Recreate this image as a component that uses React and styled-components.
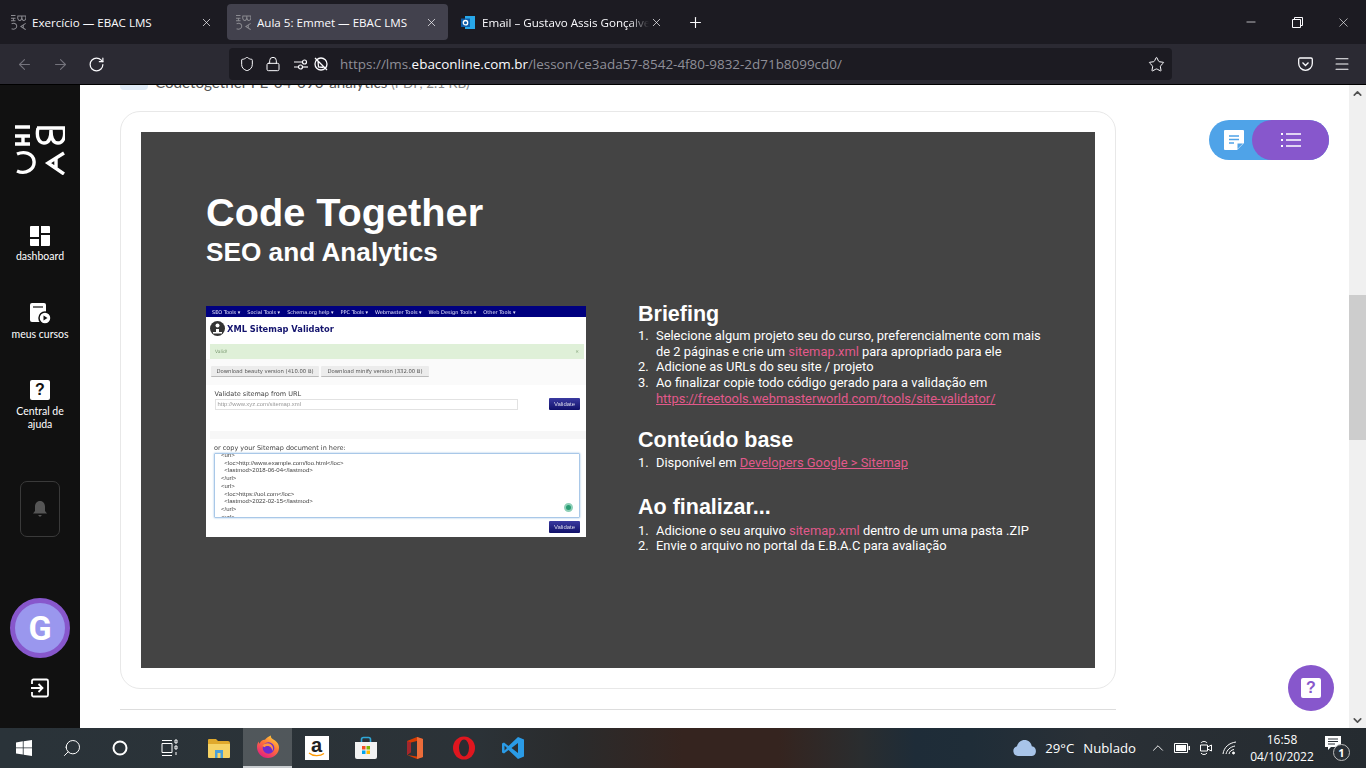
import React from 'react';
import styled, { createGlobalStyle } from 'styled-components';
import { ArrowLeft, ArrowRight, RotateCw, Lock, Star, Menu, Minus, X, Plus, Search, ChevronUp, ChevronDown, Shield } from 'lucide-react';

const GlobalStyle = createGlobalStyle`
  * { box-sizing: border-box; }
  html, body { margin: 0; padding: 0; height: 100%; overflow: hidden; background: #fff; }
  body { font-family: "Open Sans", "Liberation Sans", sans-serif; }
`;

const Screen = styled.div`
  width: 1366px;
  height: 768px;
  display: flex;
  flex-direction: column;
  overflow: hidden;
`;

/* browser chrome */
const TabBar = styled.div`
  height: 44px;
  background: #1c1b22;
  display: flex;
  align-items: center;
  padding: 0 0 0 2px;
  gap: 4px;
  flex: none;
`;

const Tab = styled.div`
  width: 221px;
  height: 36px;
  border-radius: 4px;
  background: ${p => (p.$active ? '#42414d' : 'transparent')};
  display: flex;
  align-items: center;
  padding: 0 9px;
  color: #fbfbfe;
  font-size: 11.6px;
  flex: none;
`;

const TabFavicon = styled.span`
  width: 15px;
  height: 15px;
  flex: none;
  display: flex;
  margin-right: 6px;
`;

const TabTitle = styled.span`
  flex: 1;
  white-space: nowrap;
  overflow: hidden;
  ${p => p.$fade && `mask-image: linear-gradient(to right, #000 88%, transparent 100%);`}
`;

const TabClose = styled.span`
  width: 14px;
  display: flex;
  justify-content: center;
  flex: none;
  margin-right: 1px;
`;

const NewTab = styled.span`
  display: flex;
  margin-left: 10px;
  color: #fbfbfe;
`;

const WindowControls = styled.div`
  margin-left: auto;
  display: flex;
  color: #fbfbfe;
`;

const WindowButton = styled.span`
  width: 46px;
  height: 44px;
  display: flex;
  align-items: center;
  justify-content: center;
`;

const NavBar = styled.div`
  height: 41px;
  background: #2b2a33;
  border-bottom: 1px solid #000;
  display: flex;
  align-items: center;
  flex: none;
`;

const NavButton = styled.span`
  width: 36px;
  display: flex;
  justify-content: center;
  color: ${p => (p.$dim ? '#74737c' : '#fbfbfe')};
`;

const NavButtons = styled.div`
  width: 229px;
  padding-left: 6px;
  display: flex;
  flex: none;
`;

const UrlBar = styled.div`
  width: 943px;
  height: 32px;
  background: #1c1b22;
  border-radius: 4px;
  display: flex;
  align-items: center;
  padding: 0 7px 0 10px;
  color: #fbfbfe;
  flex: none;
`;

const UrlIcon = styled.span`
  display: flex;
  flex: none;
  margin-right: ${p => p.$gap}px;
`;

const UrlText = styled.span`
  font-size: 13.45px;
  color: #8f8f98;
  white-space: nowrap;
  b { font-weight: 400; color: #fbfbfe; }
`;

const UrlStar = styled.span`
  margin-left: auto;
  display: flex;
`;

const NavRight = styled.div`
  flex: 1;
  display: flex;
  justify-content: flex-end;
  gap: 20px;
  padding-right: 15px;
  color: #fbfbfe;
  align-items: center;
`;

/* page */
const Main = styled.div`
  flex: 1;
  display: flex;
  min-height: 0;
  position: relative;
`;

const Sidebar = styled.nav`
  width: 80px;
  background: #111;
  flex: none;
  display: flex;
  flex-direction: column;
  align-items: center;
  padding-top: 40px;
  color: #fff;
`;

const SideLink = styled.div`
  display: flex;
  flex-direction: column;
  align-items: center;
  font-family: Lato, "Open Sans", sans-serif;
  font-size: 10.5px;
  line-height: 13px;
  text-align: center;
  margin-top: ${p => p.$top}px;
  width: 60px;
  svg { margin-bottom: ${p => p.$iconGap}px; display: block; }
`;

const BellBox = styled.div`
  width: 40px;
  height: 56px;
  margin-top: 50px;
  border: 1px solid #3a3a3a;
  border-radius: 7px;
  display: flex;
  align-items: center;
  justify-content: center;
`;

const Avatar = styled.div`
  width: 60px;
  height: 60px;
  margin-top: 61px;
  border-radius: 50%;
  border: 5px solid #8757cc;
  background: #9a97ee;
  color: #fff;
  display: flex;
  align-items: center;
  justify-content: center;
  font-family: Roboto, sans-serif;
  font-weight: 700;
  font-size: 34px;
`;

const ExitLink = styled.div`
  margin-top: 20px;
  display: flex;
`;

const Content = styled.div`
  flex: 1;
  min-width: 0;
  overflow: hidden;
  padding-left: 40px;
`;

const Attachment = styled.div`
  height: 26px;
  margin-top: -21px;
  display: flex;
  align-items: flex-end;
  gap: 7px;
  font-family: Lato, sans-serif;
  font-size: 15.2px;
  line-height: 14px;
  color: #555;
  white-space: nowrap;
  small { font-size: 13.5px; color: #888; }
`;

const AttachmentIcon = styled.span`
  width: 28px;
  height: 26px;
  background: #e0ebf7;
  border-radius: 4px;
  flex: none;
`;

const Card = styled.section`
  width: 996px;
  height: 578px;
  margin-top: 21px;
  padding: 20px;
  border: 1px solid #e8e8e8;
  border-radius: 20px;
  background: #fff;
`;

const Slide = styled.div`
  width: 954px;
  height: 536px;
  background: #444;
  color: #fff;
  padding: 57px 0 0 65px;
  font-family: "Liberation Sans", Arial, sans-serif;
`;

const SlideTitle = styled.h1`
  margin: 0;
  font-size: 39.7px;
  line-height: 46px;
  font-weight: 700;
`;

const SlideSubtitle = styled.h2`
  margin: 2px 0 0;
  font-size: 26.2px;
  line-height: 30px;
  font-weight: 700;
`;

const SlideRow = styled.div`
  display: flex;
  gap: 52px;
  margin-top: 34px;
`;

const Brief = styled.div`
  width: 410px;
`;

const BriefHeading = styled.h3`
  margin: ${p => p.$top || 0}px 0 ${p => p.$bottom || 1}px;
  font-size: 21.5px;
  line-height: 26px;
  font-weight: 700;
`;

const BriefList = styled.ol`
  margin: 0;
  padding: 0;
  list-style: none;
  font-family: Roboto, sans-serif;
  font-size: 12.9px;
  line-height: 15.7px;
`;

const BriefItem = styled.li`
  display: grid;
  grid-template-columns: 18px 1fr;
  white-space: nowrap;
`;

const Pink = styled.span`
  color: #e2598b;
`;

const PinkLink = styled.a`
  color: #e2598b;
  text-decoration: underline;
`;

/* the screenshot pasted on the slide */
const Shot = styled.div`
  width: 380px;
  height: 231px;
  margin-top: 5px;
  background: #fff;
  flex: none;
  display: flex;
  flex-direction: column;
  color: #333;
  font-family: "DejaVu Sans", sans-serif;
  overflow: hidden;
  filter: blur(0.45px);
`;

const ShotMenu = styled.div`
  height: 11px;
  background: #00007f;
  color: #e8e8ff;
  font-size: 5px;
  display: flex;
  align-items: center;
  gap: 7px;
  padding-left: 6px;
  white-space: nowrap;
  flex: none;
`;

const ShotHead = styled.div`
  height: 27px;
  display: flex;
  align-items: center;
  gap: 2px;
  padding: 0 0 4px 4px;
  font-size: 8.3px;
  font-weight: 700;
  color: #14146e;
  flex: none;
`;

const ShotAlert = styled.div`
  height: 15px;
  margin: 0 2px 0 4px;
  background: #dff0d8;
  color: #7a9a70;
  font-size: 4.5px;
  display: flex;
  align-items: center;
  justify-content: space-between;
  padding: 0 5px;
  flex: none;
`;

const ShotActions = styled.div`
  height: 26px;
  padding: 7px 0 0 5px;
  display: flex;
  gap: 2px;
  background: #fafafa;
  flex: none;
`;

const ShotDownload = styled.span`
  height: 11px;
  width: 108px;
  background: #ececec;
  border-bottom: 1px solid #bbb;
  border-radius: 1px;
  font-size: 5.3px;
  color: #555;
  display: flex;
  align-items: center;
  justify-content: center;
  white-space: nowrap;
`;

const ShotForm = styled.div`
  height: 46px;
  padding: 0 6px 0 8.5px;
  flex: none;
`;

const ShotLabel = styled.div`
  font-size: 6.5px;
  line-height: 9px;
  padding-top: ${p => p.$top}px;
  color: #444;
  white-space: nowrap;
`;

const ShotInputRow = styled.div`
  display: flex;
  justify-content: space-between;
  align-items: center;
  margin-top: -1px;
`;

const ShotInput = styled.div`
  width: 303px;
  height: 11px;
  border: 1px solid #e2e2e2;
  font-family: "Liberation Sans", sans-serif;
  font-size: 5.9px;
  color: #999;
  padding-left: 2px;
  line-height: 9px;
`;

const ShotButton = styled.span`
  width: 31px;
  height: 12px;
  background: linear-gradient(#3a3aa0, #10106a);
  border-radius: 1px;
  color: #dde;
  font-family: "Liberation Sans", sans-serif;
  font-size: 6px;
  display: flex;
  align-items: center;
  justify-content: center;
`;

const ShotBand = styled.div`
  height: 8px;
  margin-left: 4px;
  background: #f7f7f7;
  flex: none;
`;

const ShotPaste = styled.div`
  padding: 5px 6px 0 8px;
  flex: 1;
  display: flex;
  flex-direction: column;
`;

const ShotArea = styled.div`
  height: 65px;
  border: 1px solid #a9c8e8;
  border-radius: 1px;
  box-shadow: 0 0 2px #8fb8e0;
  font-family: "Liberation Sans", sans-serif;
  font-size: 6px;
  line-height: 7.7px;
  color: #444;
  padding-left: 6px;
  overflow: hidden;
  position: relative;
  white-space: pre;
  flex: none;
`;

const ShotCode = styled.div`
  margin-top: -2px;
`;

const GrammarlyDot = styled.span`
  position: absolute;
  right: 6px;
  bottom: 5px;
  width: 9px;
  height: 9px;
  border-radius: 50%;
  background: #2a9d74;
  border: 2px solid #8fd0b8;
`;

const ShotFooter = styled.div`
  display: flex;
  justify-content: flex-end;
  margin-top: 3px;
`;

const Rule = styled.hr`
  width: 996px;
  margin: 20px 0 0;
  border: 0;
  border-top: 1px solid #ddd;
`;

/* floating things over the page */
const NotesPill = styled.div`
  position: absolute;
  left: 1209px;
  top: 35px;
  width: 120px;
  height: 40px;
  border-radius: 20px;
  background: #4fa3e8;
`;

const NotesButton = styled.span`
  position: absolute;
  left: 15px;
  top: 10px;
  display: flex;
`;

const ListButton = styled.span`
  position: absolute;
  right: 0;
  top: 0;
  width: 77px;
  height: 40px;
  border-radius: 20px;
  background: #8757cc;
  display: flex;
  align-items: center;
  justify-content: center;
`;

const HelpFab = styled.div`
  position: absolute;
  left: 1288px;
  top: 580px;
  width: 46px;
  height: 46px;
  border-radius: 50%;
  background: #8757cc;
  display: flex;
  align-items: center;
  justify-content: center;
`;

const HelpSquare = styled.span`
  width: 20px;
  height: 20px;
  border-radius: 2px;
  background: ${p => p.$bg};
  color: ${p => p.$fg};
  font-family: "Liberation Sans", sans-serif;
  font-weight: 700;
  font-size: 16px;
  line-height: 20px;
  text-align: center;
  display: block;
  margin-bottom: ${p => p.$gap || 0}px;
`;

const Scrollbar = styled.div`
  width: 17px;
  background: #f0f0f0;
  flex: none;
  display: flex;
  flex-direction: column;
  align-items: center;
  color: #505050;
`;

const ScrollThumb = styled.div`
  width: 17px;
  height: 145px;
  margin: 194px 0 auto;
  background: #cdcdcd;
`;

const ScrollArrow = styled.span`
  height: 16px;
  display: flex;
  align-items: center;
`;

/* windows taskbar */
const Taskbar = styled.footer`
  height: 40px;
  flex: none;
  background: linear-gradient(90deg, #2a3339 0%, #2b3237 35%, #2a2b2c 42%, #35241f 50%, #35241f 57%, #2a2d2f 63%, #1e2c38 67%, #1f2d38 71%, #2a3036 80%, #252b30 100%);
  display: flex;
  align-items: stretch;
  color: #fff;
`;

const TaskSlot = styled.span`
  width: ${p => p.$w || 49}px;
  display: flex;
  align-items: center;
  justify-content: center;
  flex: none;
  ${p => p.$active && `
    background: rgba(255,255,255,.18);
    border-bottom: 2px solid #c9cdd0;
  `}
`;

const FlippedSearch = styled(Search)`
  transform: scaleX(-1);
`;

const AmazonTile = styled.span`
  width: 24px;
  height: 24px;
  background: #fff;
  color: #222;
  font-family: "Liberation Sans", sans-serif;
  font-weight: 700;
  font-size: 20px;
  line-height: 19px;
  text-align: center;
  position: relative;
  display: block;
  svg { position: absolute; left: 3px; bottom: 2px; }
`;

const Tray = styled.div`
  margin-left: auto;
  display: flex;
  align-items: center;
  font-size: 13.2px;
  font-family: "Open Sans", sans-serif;
`;

const TrayLabel = styled.span`
  margin-left: ${p => p.$left}px;
  white-space: nowrap;
`;

const TrayIcon = styled.span`
  width: 24px;
  display: flex;
  justify-content: center;
  margin-left: ${p => p.$left || 0}px;
`;

const Clock = styled.div`
  width: 78px;
  margin-left: 1px;
  font-size: 12px;
  line-height: 17px;
  text-align: center;
`;

const NotifyBox = styled.span`
  width: 28px;
  height: 30px;
  position: relative;
  display: block;
  margin-left: 3px;
  svg { position: absolute; left: 1px; top: 3px; }
`;

const NotifyBadge = styled.span`
  position: absolute;
  left: 9px;
  top: 11px;
  width: 17px;
  height: 17px;
  border-radius: 50%;
  border: 1px solid #bbb;
  background: #2a3036;
  font-size: 11px;
  font-weight: 700;
  line-height: 15px;
  text-align: center;
`;

const ShowDesktop = styled.span`
  width: 5px;
  margin-left: 9px;
  border-left: 1px solid #5a6066;
`;

function EbacLogo({ size = 50, color = '#fff' }) {
  return (
    <svg width={size} height={size} viewBox="0 0 50 50" fill="none" stroke={color} strokeWidth="3.4">
      <path d="M0 2h15M0 11h15M0 19h15M8 11v8" />
      <path d="M22 3h28M23 3c-2 9 1 15 6 15s7-5 7-13c0 8 2 13 7 13s8-6 6-15" />
      <path d="M2 29c7-3 16-1 17 7 1 8-8 14-17 10" />
      <path d="M49 28 33 38l16 11M41 33v10" />
    </svg>
  );
}

function WindowsLogo() {
  return (
    <svg width="16" height="16" viewBox="0 0 16 16" fill="#fff"><path d="M0 2.4 6.8 1.3v6.2H0zM7.6 1.2 16 0v7.5H7.6zM0 8.3h6.8v6.3L0 13.6zM7.6 8.3H16V16l-8.4-1.2z" /></svg>
  );
}

function TaskViewIcon() {
  return (
    <svg width="17" height="18" viewBox="0 0 17 18" fill="none" stroke="#fff" strokeWidth="1"><path d="M1 1.5h10M1 16.5h10M1 4.5h10v9H1zM14 1h2v3h-2zM14 7h2v3h-2zM15 13v3" /></svg>
  );
}

function FolderIcon() {
  return (
    <svg width="24" height="22" viewBox="0 0 24 22"><path d="M1 3a1 1 0 0 1 1-1h7l2 2h10a2 2 0 0 1 2 2v14H1z" fill="#e0a92c" /><path d="M1 7h22v13a1 1 0 0 1-1 1H2a1 1 0 0 1-1-1z" fill="#f6d365" /><path d="M8 13h8v8H8z" fill="#4a9fd8" /><path d="M10.5 16h3v5h-3z" fill="#f6d365" /></svg>
  );
}

function FirefoxIcon() {
  return (
    <svg width="24" height="24" viewBox="0 0 24 24">
      <defs>
        <linearGradient id="ffx" x1="0.8" y1="0" x2="0.2" y2="1"><stop offset="0" stopColor="#ffd43a" /><stop offset=".45" stopColor="#ff7139" /><stop offset="1" stopColor="#e31587" /></linearGradient>
      </defs>
      <path d="M12 23C5.5 23 1 18 1 12c0-2 .6-4 1.6-5.4.1 1 .5 1.8 1 2.2C4.5 6 7 4.5 9 4.8 10 3 13 1.5 15 .6c-.4 1.5.3 2.8 1.6 3.5C20 6 23 8.5 23 12.5 23 18.5 18 23 12 23z" fill="url(#ffx)" />
      <circle cx="12.5" cy="13" r="5.8" fill="#6e2bd0" />
      <path d="M6.5 11c1-1.8 3-3 5.5-2.8 3 .2 5 2.5 5 5 0 1-.3 2-.8 2.8.2-2.8-2-5-4.5-5-1.5 0-2.5.5-3.2 1.2z" fill="#ff9640" />
    </svg>
  );
}

function StoreIcon() {
  return (
    <svg width="24" height="24" viewBox="0 0 24 24"><path d="M7.5 6V3.5a2 2 0 0 1 2-2h5a2 2 0 0 1 2 2V6" fill="none" stroke="#2fa8d8" strokeWidth="1.6" /><path d="M1 6h22v15a2 2 0 0 1-2 2H3a2 2 0 0 1-2-2z" fill="#f2f2f2" /><path d="M8 10h3.5v3.5H8z" fill="#f25022" /><path d="M12.5 10H16v3.5h-3.5z" fill="#7fba00" /><path d="M8 14.5h3.5V18H8z" fill="#00a4ef" /><path d="M12.5 14.5H16V18h-3.5z" fill="#ffb900" /></svg>
  );
}

function OfficeIcon() {
  return (
    <svg width="22" height="24" viewBox="0 0 22 24"><path d="M3 5 13 1l6 2v18l-6 2L3 19l10 1.5V5L7 6.5V16l-4 3z" fill="#d83b01" /><path d="M13 1l6 2v18l-6 2z" fill="#eb6c3a" /><path d="M3 5l4 1.5V16l-4 3z" fill="#a4262c" /></svg>
  );
}

function OperaIcon() {
  return (
    <svg width="24" height="24" viewBox="0 0 24 24"><ellipse cx="12" cy="12" rx="11" ry="11.5" fill="#e0161f" /><ellipse cx="12" cy="12" rx="5" ry="8.5" fill="#2a2d32" /></svg>
  );
}

function VscodeIcon() {
  return (
    <svg width="24" height="24" viewBox="0 0 24 24"><path d="M17 1 7.5 10 3 6.5 1 7.5v9l2 1 4.5-3.5L17 23l6-2.5v-17zM17 7v10l-6.5-5zM3.5 9.5 6 12l-2.5 2.5z" fill="#2a9be6" /></svg>
  );
}

function Bell() {
  return (
    <svg width="16" height="18" viewBox="0 0 16 18" fill="#555"><path d="M8 1c3.2 0 5 2.5 5 5.5V11l2 2.5H1L3 11V6.5C3 3.5 4.8 1 8 1z" /><path d="M6 15h4l-2 2z" /></svg>
  );
}

const shotMenu = ['SEO Tools ▾', 'Social Tools ▾', 'Schema.org help ▾', 'PPC Tools ▾', 'Webmaster Tools ▾', 'Web Design Tools ▾', 'Other Tools ▾'];

const sitemap = `<url>
  <loc>http://www.example.com/foo.html</loc>
  <lastmod>2018-06-04</lastmod>
</url>
<url>
  <loc>https://uol.com</loc>
  <lastmod>2022-02-15</lastmod>
</url>
<url>`;

function SitemapShot() {
  return (
    <Shot>
      <ShotMenu>{shotMenu.map(m => <span key={m}>{m}</span>)}</ShotMenu>
      <ShotHead>
        <svg width="15" height="15" viewBox="0 0 15 15"><circle cx="7.5" cy="7.5" r="7.5" fill="#333" /><circle cx="7.5" cy="4.5" r="2" fill="#fff" /><path d="M3 11h3V8h3v3h3v1.5H3z" fill="#fff" /></svg>
        XML Sitemap Validator
      </ShotHead>
      <ShotAlert><span>Valid!</span><span>×</span></ShotAlert>
      <ShotActions>
        <ShotDownload>Download beauty version (410.00 B)</ShotDownload>
        <ShotDownload>Download minify version (332.00 B)</ShotDownload>
      </ShotActions>
      <ShotForm>
        <ShotLabel $top={5}>Validate sitemap from URL</ShotLabel>
        <ShotInputRow>
          <ShotInput>http://www.xyz.com/sitemap.xml</ShotInput>
          <ShotButton>Validate</ShotButton>
        </ShotInputRow>
      </ShotForm>
      <ShotBand />
      <ShotPaste>
        <ShotLabel $top={0}>or copy your Sitemap document in here:</ShotLabel>
        <ShotArea><ShotCode>{sitemap}</ShotCode><GrammarlyDot /></ShotArea>
        <ShotFooter><ShotButton>Validate</ShotButton></ShotFooter>
      </ShotPaste>
    </Shot>
  );
}

export default function App() {
  return (
    <Screen>
      <GlobalStyle />
      <TabBar>
        <Tab>
          <TabFavicon><EbacLogo size={15} color="#8a8a90" /></TabFavicon>
          <TabTitle>Exercício — EBAC LMS</TabTitle>
          <TabClose><X size={13} strokeWidth={1.3} /></TabClose>
        </Tab>
        <Tab $active>
          <TabFavicon><EbacLogo size={15} color="#8a8a90" /></TabFavicon>
          <TabTitle>Aula 5: Emmet — EBAC LMS</TabTitle>
          <TabClose><X size={13} strokeWidth={1.3} /></TabClose>
        </Tab>
        <Tab>
          <TabFavicon>
            <svg width="15" height="15" viewBox="0 0 15 15"><path d="M4 1h10v13H4z" fill="#28a8ea" /><path d="M0 3.5h9V12H0z" fill="#0f5ea8" /><circle cx="4.5" cy="7.7" r="2.2" fill="none" stroke="#fff" strokeWidth="1.3" /></svg>
          </TabFavicon>
          <TabTitle $fade>Email – Gustavo Assis Gonçalves – Outlook</TabTitle>
          <TabClose><X size={13} strokeWidth={1.3} /></TabClose>
        </Tab>
        <NewTab><Plus size={17} strokeWidth={1.6} /></NewTab>
        <WindowControls>
          <WindowButton><Minus size={14} strokeWidth={1.2} /></WindowButton>
          <WindowButton>
            <svg width="11" height="11" viewBox="0 0 11 11" fill="none" stroke="#fbfbfe"><path d="M.5 2.5h8v8h-8zM2.5 2.5v-2h8v8h-2" /></svg>
          </WindowButton>
          <WindowButton><X size={15} strokeWidth={1} /></WindowButton>
        </WindowControls>
      </TabBar>

      <NavBar>
        <NavButtons>
          <NavButton $dim><ArrowLeft size={17} strokeWidth={1.5} /></NavButton>
          <NavButton $dim><ArrowRight size={17} strokeWidth={1.5} /></NavButton>
          <NavButton><RotateCw size={17} strokeWidth={1.7} /></NavButton>
        </NavButtons>
        <UrlBar>
          <UrlIcon $gap={10}><Shield size={16} strokeWidth={1.5} /></UrlIcon>
          <UrlIcon $gap={12}><Lock size={16} strokeWidth={1.5} /></UrlIcon>
          <UrlIcon $gap={4}>
            <svg width="16" height="16" viewBox="0 0 16 16" fill="none" stroke="#fbfbfe" strokeWidth="1.2"><path d="M1 6h8M1 11h4" /><circle cx="11.5" cy="6" r="2" /><circle cx="7.5" cy="11" r="2" /><path d="M10 11h5" /></svg>
          </UrlIcon>
          <UrlIcon $gap={11}>
            <svg width="16" height="16" viewBox="0 0 16 16" fill="none" stroke="#fbfbfe" strokeWidth="1.3"><circle cx="8" cy="8" r="6" /><path d="M2 2l12 12M5 5l.5 6 5 .5" /></svg>
          </UrlIcon>
          <UrlText>https://lms.<b>ebaconline.com.br</b>/lesson/ce3ada57-8542-4f80-9832-2d71b8099cd0/</UrlText>
          <UrlStar><Star size={17} strokeWidth={1.4} /></UrlStar>
        </UrlBar>
        <NavRight>
          <svg width="15" height="14" viewBox="0 0 15 14" fill="none" stroke="#fbfbfe" strokeWidth="1.3"><path d="M2 1h11a1.3 1.3 0 0 1 1.3 1.3v4.2a6.800 6.800 0 0 1-13.600 0V2.300A1.300 1.300 0 0 1 2 1z" /><path d="M4.5 5.5l3 3 3-3" /></svg>
          <Menu size={18} strokeWidth={1.4} />
        </NavRight>
      </NavBar>

      <Main>
        <Sidebar>
          <EbacLogo />
          <SideLink $top={51} $iconGap={4}>
            <svg width="20" height="20" viewBox="0 0 20 20" fill="#fff"><path d="M0 1a1 1 0 0 1 1-1h8v11H0zM11 0h8a1 1 0 0 1 1 1v6h-9zM0 13h9v7H1a1 1 0 0 1-1-1zM11 9h9v10a1 1 0 0 1-1 1h-8z" /></svg>
            dashboard
          </SideLink>
          <SideLink $top={40} $iconGap={4}>
            <svg width="21" height="21" viewBox="0 0 21 21"><path d="M2 0h12a2 2 0 0 1 2 2v17H2a2 2 0 0 1-2-2V2a2 2 0 0 1 2-2z" fill="#fff" /><path d="M3 4h10" stroke="#111" strokeWidth="1.2" /><circle cx="15" cy="15" r="6" fill="#fff" stroke="#111" strokeWidth="1.5" /><path d="M13.5 12.5v5l4-2.5z" fill="#111" /></svg>
            meus cursos
          </SideLink>
          <SideLink $top={39} $iconGap={3}>
            <HelpSquare $bg="#fff" $fg="#111" $gap={5}>?</HelpSquare>
            Central de ajuda
          </SideLink>
          <BellBox><Bell /></BellBox>
          <Avatar>G</Avatar>
          <ExitLink>
            <svg width="20" height="20" viewBox="0 0 20 20" fill="none" stroke="#fff" strokeWidth="1.8"><path d="M2 6V3a1.5 1.5 0 0 1 1.5-1.5h13A1.5 1.5 0 0 1 18 3v14a1.5 1.5 0 0 1-1.5 1.5h-13A1.5 1.5 0 0 1 2 17v-3" /><path d="M1 10h11M8.5 6l4 4-4 4" /></svg>
          </ExitLink>
        </Sidebar>

        <Content>
          <Attachment>
            <AttachmentIcon />
            <span>Codetogether FE-04-090-analytics <small>(PDF, 2.1 KB)</small></span>
          </Attachment>
          <Card>
            <Slide>
              <SlideTitle>Code Together</SlideTitle>
              <SlideSubtitle>SEO and Analytics</SlideSubtitle>
              <SlideRow>
                <SitemapShot />
                <Brief>
                  <BriefHeading>Briefing</BriefHeading>
                  <BriefList>
                    <BriefItem><span>1.</span><span>Selecione algum projeto seu do curso, preferencialmente com mais<br />de 2 páginas e crie um <Pink>sitemap.xml</Pink> para apropriado para ele</span></BriefItem>
                    <BriefItem><span>2.</span><span>Adicione as URLs do seu site / projeto</span></BriefItem>
                    <BriefItem><span>3.</span><span>Ao finalizar copie todo código gerado para a validação em<br /><PinkLink>https://freetools.webmasterworld.com/tools/site-validator/</PinkLink></span></BriefItem>
                  </BriefList>
                  <BriefHeading $top={20} $bottom={2}>Conteúdo base</BriefHeading>
                  <BriefList>
                    <BriefItem><span>1.</span><span>Disponível em <PinkLink>Developers Google &gt; Sitemap</PinkLink></span></BriefItem>
                  </BriefList>
                  <BriefHeading $top={24} $bottom={2.5}>Ao finalizar...</BriefHeading>
                  <BriefList>
                    <BriefItem><span>1.</span><span>Adicione o seu arquivo <Pink>sitemap.xml</Pink> dentro de um uma pasta .ZIP</span></BriefItem>
                    <BriefItem><span>2.</span><span>Envie o arquivo no portal da E.B.A.C para avaliação</span></BriefItem>
                  </BriefList>
                </Brief>
              </SlideRow>
            </Slide>
          </Card>
          <Rule />
        </Content>

        <Scrollbar>
          <ScrollArrow><ChevronUp size={13} strokeWidth={3} /></ScrollArrow>
          <ScrollThumb />
          <ScrollArrow><ChevronDown size={13} strokeWidth={3} /></ScrollArrow>
        </Scrollbar>

        <NotesPill>
          <NotesButton>
            <svg width="20" height="20" viewBox="0 0 20 20"><path d="M1 0h18a1 1 0 0 1 1 1v12l-7 7H1a1 1 0 0 1-1-1V1a1 1 0 0 1 1-1z" fill="#fff" /><path d="M5 6h10M5 9.5h10M5 13h5" stroke="#4fa3e8" strokeWidth="1.5" /><path d="M13.5 19v-5.5H19z" fill="#4fa3e8" /></svg>
          </NotesButton>
          <ListButton>
            <svg width="20" height="16" viewBox="0 0 20 16" fill="none" stroke="#fff" strokeWidth="1.3"><path d="M5 2h15M5 8h15M5 14h15" /><path d="M0 2h2M0 8h2M0 14h2" strokeWidth="2" /></svg>
          </ListButton>
        </NotesPill>
        <HelpFab><HelpSquare $bg="#fff" $fg="#8757cc">?</HelpSquare></HelpFab>
      </Main>

      <Taskbar>
        <TaskSlot $w={48}><WindowsLogo /></TaskSlot>
        <TaskSlot $w={48}><FlippedSearch size={20} strokeWidth={1.2} /></TaskSlot>
        <TaskSlot $w={48}>
          <svg width="16" height="16" viewBox="0 0 16 16" fill="none" stroke="#fff" strokeWidth="2"><circle cx="8" cy="8" r="6.5" /></svg>
        </TaskSlot>
        <TaskSlot $w={50}><TaskViewIcon /></TaskSlot>
        <TaskSlot><FolderIcon /></TaskSlot>
        <TaskSlot $active><FirefoxIcon /></TaskSlot>
        <TaskSlot>
          <AmazonTile>a
            <svg width="18" height="6" viewBox="0 0 18 6" fill="none" stroke="#f90" strokeWidth="1.3"><path d="M1 1c4 3.5 11 3.5 15 .5" /></svg>
          </AmazonTile>
        </TaskSlot>
        <TaskSlot><StoreIcon /></TaskSlot>
        <TaskSlot><OfficeIcon /></TaskSlot>
        <TaskSlot><OperaIcon /></TaskSlot>
        <TaskSlot><VscodeIcon /></TaskSlot>
        <Tray>
          <svg width="24" height="16" viewBox="0 0 24 16"><path d="M5 16a5 5 0 0 1-1-9.8C5 2.5 8 0 11.5 0c3.8 0 6.8 2.7 7.3 6.2A5 5 0 0 1 19 16z" fill="#a8c4e8" /></svg>
          <TrayLabel $left={8}>29°C</TrayLabel>
          <TrayLabel $left={9}>Nublado</TrayLabel>
          <TrayIcon $left={10}><ChevronUp size={18} strokeWidth={1.2} /></TrayIcon>
          <TrayIcon>
            <svg width="16" height="10" viewBox="0 0 16 10"><path d="M.5.5h13v9H.5z" fill="none" stroke="#fff" /><path d="M2 2h10v6H2z" fill="#fff" /><path d="M14.5 3H16v4h-1.5z" fill="#fff" /></svg>
          </TrayIcon>
          <TrayIcon>
            <svg width="14" height="16" viewBox="0 0 14 16" fill="none" stroke="#fff"><path d="M1.5 5h7v6h-7zM8.5 7l4-2v6l-4-2M2 3c1-2 5-2 6 0M2 13c1 2 5 2 6 0" /></svg>
          </TrayIcon>
          <TrayIcon>
            <svg width="16" height="14" viewBox="0 0 16 14" fill="none" stroke="#fff"><path d="M1 13C2 6 7 2 14 1M4 13c1-4 4-7 9-8M7 13c.5-2.5 2-4 5-4.5" /><circle cx="11.5" cy="12" r="1" fill="#fff" /></svg>
          </TrayIcon>
          <Clock>16:58<br />04/10/2022</Clock>
          <NotifyBox>
            <svg width="16" height="15" viewBox="0 0 16 15" fill="#fff"><path d="M0 0h16v11H6l-3 3v-3H0z" /><path d="M3 3h10M3 5.5h10M3 8h7" stroke="#2a3036" /></svg>
            <NotifyBadge>1</NotifyBadge>
          </NotifyBox>
          <ShowDesktop />
        </Tray>
      </Taskbar>
    </Screen>
  );
}
